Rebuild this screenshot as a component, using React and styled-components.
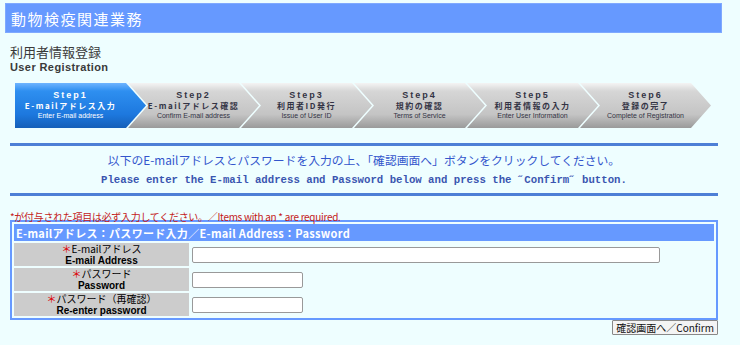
import React from "react";
import styled, { createGlobalStyle } from "styled-components";

const Global = createGlobalStyle`
  body {
    margin: 0;
    background: #eefeff;
    font-family: "Noto Sans CJK JP", "Liberation Sans", sans-serif;
  }
`;

const Page = styled.div`
  width: 740px;
  height: 345px;
  padding-top: 3px;
  box-sizing: border-box;
  overflow: hidden;
`;

const Header = styled.div`
  margin: 0 18px 0 5px;
  height: 30px;
  background: #6699ff;
  border: 1px solid #7fa9ff;
  box-sizing: border-box;
  display: flex;
  align-items: center;
  padding-left: 5px;
  color: #fff;
  font-size: 15px;
  letter-spacing: 1.5px;
`;

const TitleJa = styled.div`
  margin: 11px 0 0 10px;
  font-size: 13px;
  line-height: 16px;
  color: #3a3a3a;
`;

const TitleEn = styled.div`
  margin-left: 10px;
  font-family: "Liberation Sans", sans-serif;
  font-weight: bold;
  font-size: 11px;
  line-height: 14px;
  letter-spacing: 0.4px;
  color: #3a3a3a;
`;

const Steps = styled.div`
  display: flex;
  margin: 9px 0 0 15px;
  height: 45px;
`;

const Step = styled.div`
  width: 131px;
  height: 45px;
  flex: none;
  margin-left: ${p => (p.first ? "0" : "-18px")};
  padding-right: ${p => (p.first ? "20px" : "0")};
  box-sizing: border-box;
  clip-path: ${p =>
    p.first
      ? "polygon(0 0, calc(100% - 20px) 0, 100% 50%, calc(100% - 20px) 100%, 0 100%)"
      : "polygon(0 0, calc(100% - 20px) 0, 100% 50%, calc(100% - 20px) 100%, 0 100%, 20px 50%)"};
  background: ${p =>
    p.active
      ? "linear-gradient(#6fb4ff 0%, #2e8ff0 18%, #1d78de 70%, #155fb8 100%)"
      : "linear-gradient(#f4f4f4 0%, #d6d6d6 18%, #c4c4c4 70%, #9a9a9a 100%)"};
  color: ${p => (p.active ? "#fff" : "#333344")};
  display: flex;
  flex-direction: column;
  align-items: center;
  justify-content: center;
  text-align: center;
`;

const StepNo = styled.div`
  font-family: "Liberation Sans", sans-serif;
  font-weight: bold;
  font-size: 9px;
  line-height: 11px;
  letter-spacing: 2px;
`;

const StepJa = styled.div`
  font-size: 8px;
  line-height: 10px;
  letter-spacing: 1.5px;
  font-weight: bold;
`;

const StepEn = styled.div`
  font-family: "Liberation Sans", sans-serif;
  font-size: 7px;
  line-height: 10px;
`;

const Guide = styled.div`
  margin: 15px 22px 0 10px;
  border-top: 3px solid #4d7fd6;
  border-bottom: 3px solid #4d7fd6;
  text-align: center;
  color: #3355cc;
  padding: 4px 0 0;
`;

const GuideJa = styled.div`
  font-size: 11.8px;
  line-height: 20px;
`;

const GuideEn = styled.div`
  font-family: "Liberation Mono", monospace;
  font-weight: bold;
  font-size: 10.7px;
  line-height: 16px;
  padding: 2px 0 5px;
  color: #3a55b0;
`;

const Note = styled.div`
  margin: 14px 0 0 10px;
  font-size: 10px;
  line-height: 13px;
  color: #c41a1a;
  letter-spacing: -0.3px;
`;

const Form = styled.div`
  margin: 0 22px 0 10px;
`;

const Table = styled.table`
  width: 100%;
  border: 2px solid #6699ff;
  border-spacing: 2px;
  background: #eefeff;
  margin-top: -3px;
`;

const Th = styled.th`
  background: #6699ff;
  color: #fff;
  text-align: left;
  font-weight: bold;
  font-size: 11px;
  height: 17px;
  padding: 0 2px;
  letter-spacing: 0.3px;
`;

const Label = styled.td`
  width: 175px;
  height: 22px;
  padding: 0;
  background: #cccccc;
  text-align: center;
  font-size: 10px;
  line-height: 11.5px;
  color: #000;
`;

const LabelEn = styled.div`
  font-family: "Liberation Sans", sans-serif;
  font-weight: bold;
`;

const Star = styled.span`
  color: #dd0000;
`;

const Field = styled.td`
  padding: 0 0 0 1px;
`;

const Input = styled.input`
  display: block;
  width: ${p => p.w}px;
  height: 16px;
  box-sizing: border-box;
  border: 1px solid #999;
  border-radius: 2px;
  background: #fff;
`;

const Actions = styled.div`
  display: flex;
  justify-content: flex-end;
`;

const Button = styled.button`
  height: 15px;
  padding: 0 3px;
  font-family: "Noto Sans CJK JP", "Liberation Sans", sans-serif;
  font-size: 10px;
  line-height: 13px;
  color: #111;
  background: #f4f4f4;
  border: 1px solid #888;
  border-radius: 1px;
`;

const steps = [
  { no: "Step1", ja: "E-mailアドレス入力", en: "Enter E-mail address" },
  { no: "Step2", ja: "E-mailアドレス確認", en: "Confirm E-mail address" },
  { no: "Step3", ja: "利用者ID発行", en: "Issue of User ID" },
  { no: "Step4", ja: "規約の確認", en: "Terms of Service" },
  { no: "Step5", ja: "利用者情報の入力", en: "Enter User Information" },
  { no: "Step6", ja: "登録の完了", en: "Complete of Registration" },
];

const rows = [
  { ja: "E-mailアドレス", en: "E-mail Address", w: 468, type: "text" },
  { ja: "パスワード", en: "Password", w: 111, type: "password" },
  { ja: "パスワード（再確認）", en: "Re-enter password", w: 111, type: "password" },
];

export default function App() {
  return (
    <Page>
      <Global />
      <Header>動物検疫関連業務</Header>
      <TitleJa>利用者情報登録</TitleJa>
      <TitleEn>User Registration</TitleEn>
      <Steps>
        {steps.map((s, i) => (
          <Step key={s.no} first={i === 0} active={i === 0}>
            <StepNo>{s.no}</StepNo>
            <StepJa>{s.ja}</StepJa>
            <StepEn>{s.en}</StepEn>
          </Step>
        ))}
      </Steps>
      <Guide>
        <GuideJa>以下のE-mailアドレスとパスワードを入力の上、「確認画面へ」ボタンをクリックしてください。</GuideJa>
        <GuideEn>Please enter the E-mail address and Password below and press the ˝Confirm˝ button.</GuideEn>
      </Guide>
      <Note>*が付与された項目は必ず入力してください。／Items with an * are required.</Note>
      <Form>
        <Table>
          <tbody>
            <tr>
              <Th colSpan={2}>E-mailアドレス：パスワード入力／E-mail Address：Password</Th>
            </tr>
            {rows.map(r => (
              <tr key={r.en}>
                <Label>
                  <div><Star>＊</Star>{r.ja}</div>
                  <LabelEn>{r.en}</LabelEn>
                </Label>
                <Field>
                  <Input type={r.type} w={r.w} />
                </Field>
              </tr>
            ))}
          </tbody>
        </Table>
        <Actions>
          <Button>確認画面へ／Confirm</Button>
        </Actions>
      </Form>
    </Page>
  );
}
